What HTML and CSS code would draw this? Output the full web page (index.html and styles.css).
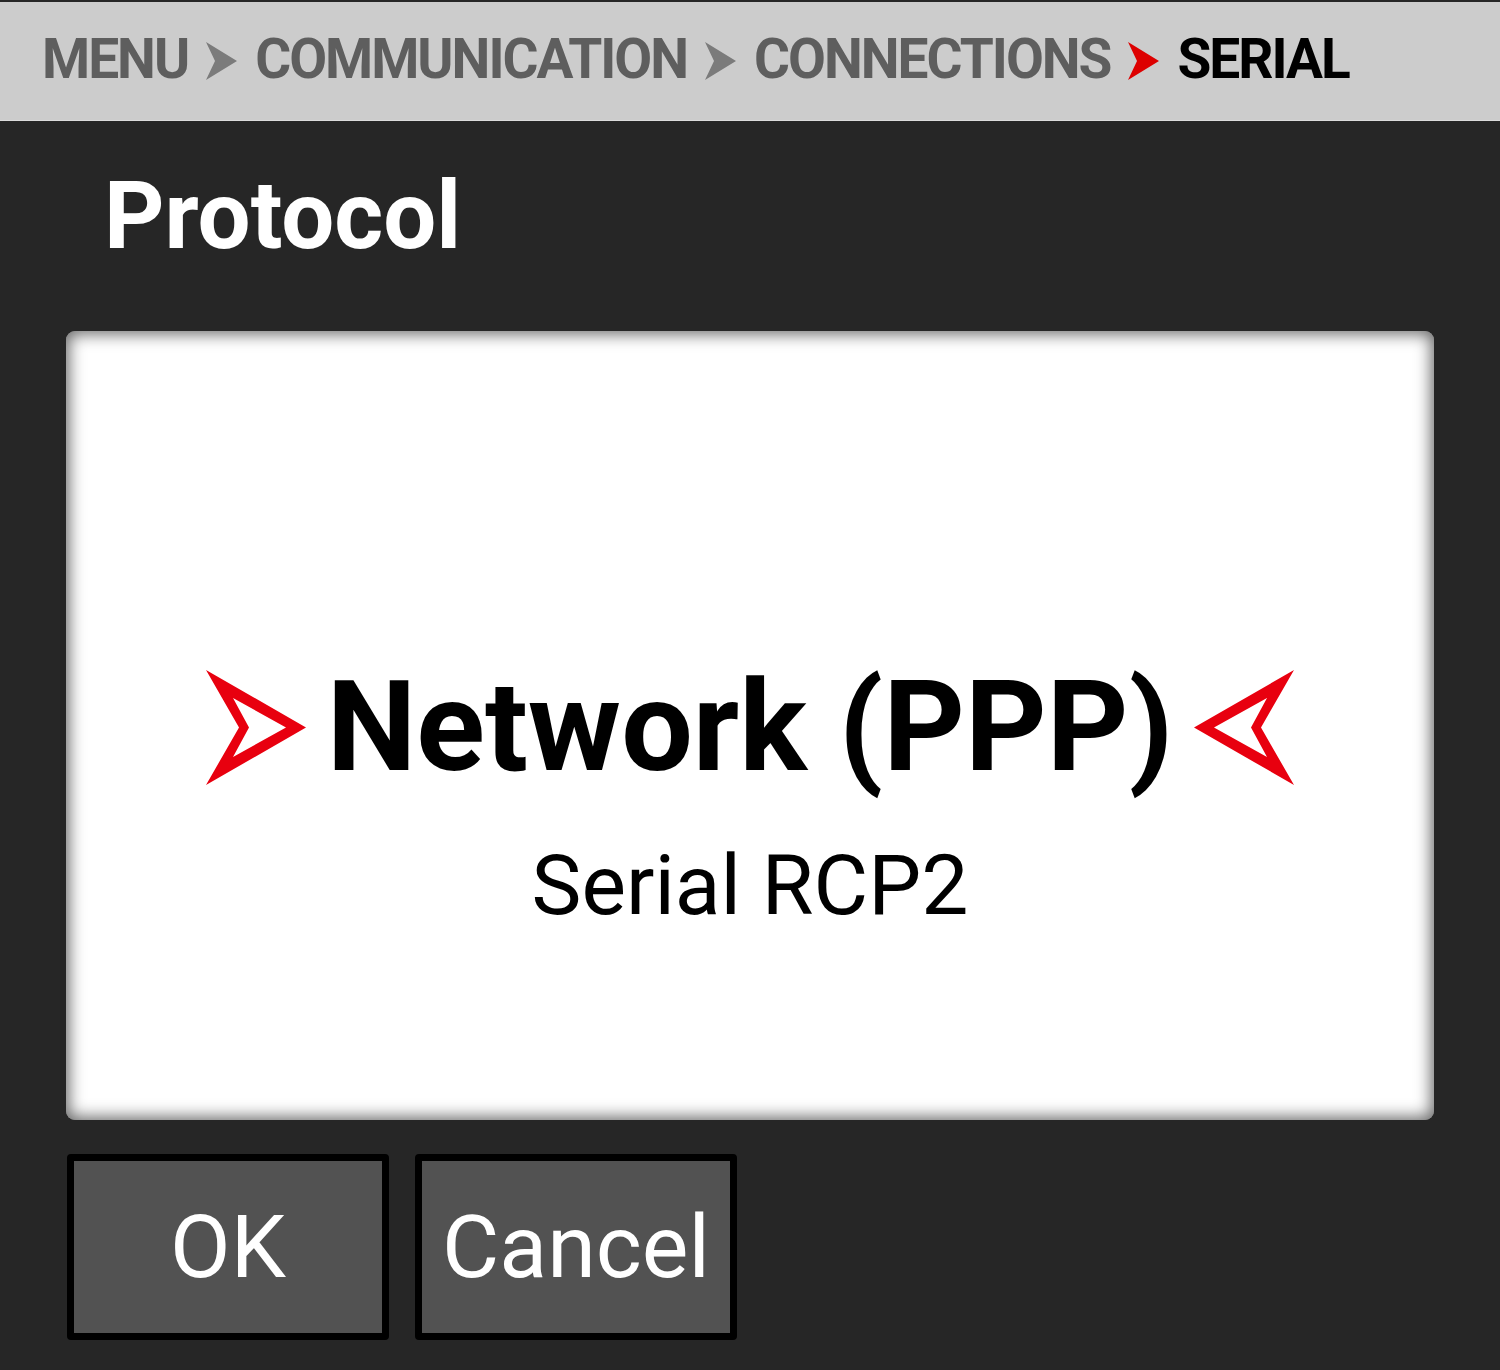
FILE: index.html
```html
<!DOCTYPE html>
<html>
<head>
<meta charset="utf-8">
<link rel="stylesheet" href="styles.css">
</head>
<body>
<header class="crumbs">
  <span class="crumb">MENU</span>
  <svg class="chev" viewBox="0 0 31 38"><path d="M0 0 L31 19 L0 38 L9 19 Z"/></svg>
  <span class="crumb">COMMUNICATION</span>
  <svg class="chev" viewBox="0 0 31 38"><path d="M0 0 L31 19 L0 38 L9 19 Z"/></svg>
  <span class="crumb">CONNECTIONS</span>
  <svg class="chev chev-red" viewBox="0 0 31 38"><path d="M0 0 L31 19 L0 38 L9 19 Z"/></svg>
  <span class="crumb crumb-current">SERIAL</span>
</header>
<main class="content">
  <h1 class="title">Protocol</h1>
  <section class="picker">
    <div class="option option-selected">
      <svg class="sel-arrow" viewBox="0 0 100 115"><path fill-rule="evenodd" d="M0 0 L100 57.5 L0 115 L33 57.5 Z M27 28 L80 57.5 L27 87 L43 57.5 Z"/></svg>
      <span class="option-text">Network (PPP)</span>
      <svg class="sel-arrow sel-arrow-left" viewBox="0 0 100 115"><path fill-rule="evenodd" d="M0 0 L100 57.5 L0 115 L33 57.5 Z M27 28 L80 57.5 L27 87 L43 57.5 Z"/></svg>
    </div>
    <div class="option">Serial RCP2</div>
  </section>
  <div class="actions">
    <button class="btn">OK</button>
    <button class="btn">Cancel</button>
  </div>
</main>
</body>
</html>
```

FILE: styles.css
```css
html, body {
  margin: 0;
  padding: 0;
}
body {
  background: #262626;
  width: 1500px;
  height: 1370px;
  overflow: hidden;
  font-family: Roboto, "Liberation Sans", sans-serif;
}
.crumbs {
  margin-top: 2px;
  height: 119px;
  box-sizing: border-box;
  background: #cccccc;
  border-bottom: 1px solid #dcdcdc;
  display: flex;
  align-items: center;
  padding: 0 0 3px 42px;
  gap: 18px;
}
.crumb {
  font-weight: 700;
  font-size: 55px;
  letter-spacing: -2px;
  color: #5e5e5e;
  line-height: 1.17;
}
.crumb-current {
  color: #000;
}
.chev {
  width: 31px;
  height: 38px;
  fill: #7b7b7b;
  flex: none;
  margin-top: 3px;
}
.chev-red {
  fill: #dd0000;
}
.content {
  display: flex;
  flex-direction: column;
}
.title {
  margin: 40px 0 0 104px;
  font-size: 94px;
  font-weight: 700;
  line-height: 110px;
  color: #ffffff;
  letter-spacing: 0;
}
.picker {
  margin: 60px 66px 0 66px;
  height: 789px;
  box-sizing: border-box;
  background: #ffffff;
  border-radius: 9px;
  box-shadow: inset 0 0 16px 3px rgba(0, 0, 0, 0.6);
  display: flex;
  flex-direction: column;
  align-items: center;
  padding-top: 321px;
}
.option {
  font-size: 84px;
  line-height: 100px;
  color: #000;
  margin-top: 34px;
}
.option-selected {
  margin-top: 0;
  display: flex;
  align-items: center;
  gap: 21px;
  height: 150px;
  line-height: 150px;
}
.option-text {
  font-size: 127px;
  font-weight: 700;
}
.sel-arrow {
  width: 100px;
  height: 115px;
  fill: #e8000f;
  flex: none;
}
.sel-arrow-left {
  transform: scaleX(-1);
}
.actions {
  display: flex;
  gap: 26px;
  margin: 34px 0 0 67px;
}
.btn {
  width: 322px;
  height: 186px;
  box-sizing: border-box;
  border: 7px solid #000;
  border-radius: 4px;
  background: #525252;
  color: #fff;
  font-family: Roboto, "Liberation Sans", sans-serif;
  font-size: 88px;
  line-height: 1;
  padding: 0;
}
```
